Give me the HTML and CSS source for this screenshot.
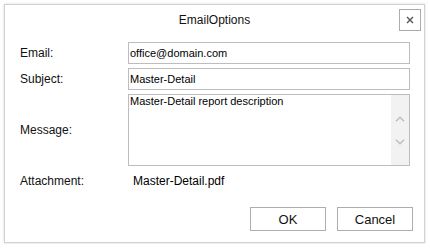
FILE: index.html
```html
<!DOCTYPE html>
<html lang="en">
<head>
  <meta charset="UTF-8" />
  <meta name="viewport" content="width=device-width, initial-scale=1.0"/>
  <title>EmailOptions</title>
  <link rel="stylesheet" href="styles.css">
</head>
<body>
  <div class="dialog">
    <div class="header">
      <div class="title">EmailOptions</div>
      <button class="close" aria-label="Close">
        <svg width="8" height="8" viewBox="0 0 8 8">
          <path d="M1 1 L7 7 M7 1 L1 7" stroke="#555" stroke-width="1.4" fill="none"/>
        </svg>
      </button>
    </div>

    <div class="form">
      <div class="label">Email:</div>
      <div class="field">office@domain.com</div>

      <div class="label">Subject:</div>
      <div class="field">Master-Detail</div>

      <div class="label">Message:</div>
      <div class="memo">
        <div class="memo-text">Master-Detail report description</div>
        <div class="scrollbar">
          <svg width="10" height="6" viewBox="0 0 10 6">
            <path d="M1 5.2 L5 1.2 L9 5.2" stroke="#bdbdbd" stroke-width="1.5" fill="none"/>
          </svg>
          <svg width="10" height="6" viewBox="0 0 10 6">
            <path d="M1 0.8 L5 4.8 L9 0.8" stroke="#bdbdbd" stroke-width="1.5" fill="none"/>
          </svg>
        </div>
      </div>

      <div class="label">Attachment:</div>
      <div class="attachment">Master-Detail.pdf</div>
    </div>

    <div class="footer">
      <button class="btn">OK</button>
      <button class="btn">Cancel</button>
    </div>
  </div>
</body>
</html>
```

FILE: styles.css
```css
* {
  margin: 0;
  padding: 0;
  box-sizing: border-box;
}

html, body {
  height: 100%;
  background: #fff;
  font-family: 'Liberation Sans', Arial, sans-serif;
  font-size: 12px;
  color: #111;
}

body {
  padding: 4px;
}

.dialog {
  width: 421px;
  height: 239px;
  border: 1px solid #d2d2d2;
  box-shadow: 0 0 2px rgba(0, 0, 0, 0.18);
  background: #fff;
  display: flex;
  flex-direction: column;
}

.header {
  position: relative;
  height: 26px;
  padding: 4px 3px 0 0;
  display: flex;
  justify-content: flex-end;
  margin-bottom: 11px;
}

.title {
  position: absolute;
  left: 0;
  right: 0;
  top: 8px;
  text-align: center;
  font-size: 12px;
  color: #111;
}

.close {
  position: relative;
  width: 22px;
  height: 22px;
  border: 1px solid #ababab;
  background: #fff;
  display: flex;
  align-items: center;
  justify-content: center;
  cursor: pointer;
}

.form {
  display: grid;
  grid-template-columns: 108px 282px;
  grid-template-rows: 22px 22px 72px 22px;
  row-gap: 4px;
  margin-left: 15px;
}

.label {
  display: flex;
  align-items: center;
  font-size: 12px;
}

.field {
  border: 1px solid #bdbdbd;
  padding: 0 1px;
  font-size: 11px;
  line-height: 20px;
  color: #000;
}

.memo {
  border: 1px solid #bdbdbd;
  display: flex;
}

.memo-text {
  flex: 1;
  padding: 0 1px;
  font-size: 11px;
  line-height: 13px;
  color: #000;
}

.scrollbar {
  width: 18px;
  background: #f2f2f2;
  display: flex;
  flex-direction: column;
  align-items: center;
  justify-content: center;
  gap: 17px;
}

.attachment {
  display: flex;
  align-items: center;
  padding-left: 5px;
  font-size: 12px;
  color: #000;
}

.footer {
  margin-top: auto;
  display: flex;
  justify-content: flex-end;
  gap: 11px;
  padding: 0 11px 11px 0;
}

.btn {
  width: 76px;
  height: 24px;
  border: 1px solid #adadad;
  background: #fff;
  font-family: 'Liberation Sans', Arial, sans-serif;
  font-size: 13px;
  color: #111;
  cursor: pointer;
}
```
